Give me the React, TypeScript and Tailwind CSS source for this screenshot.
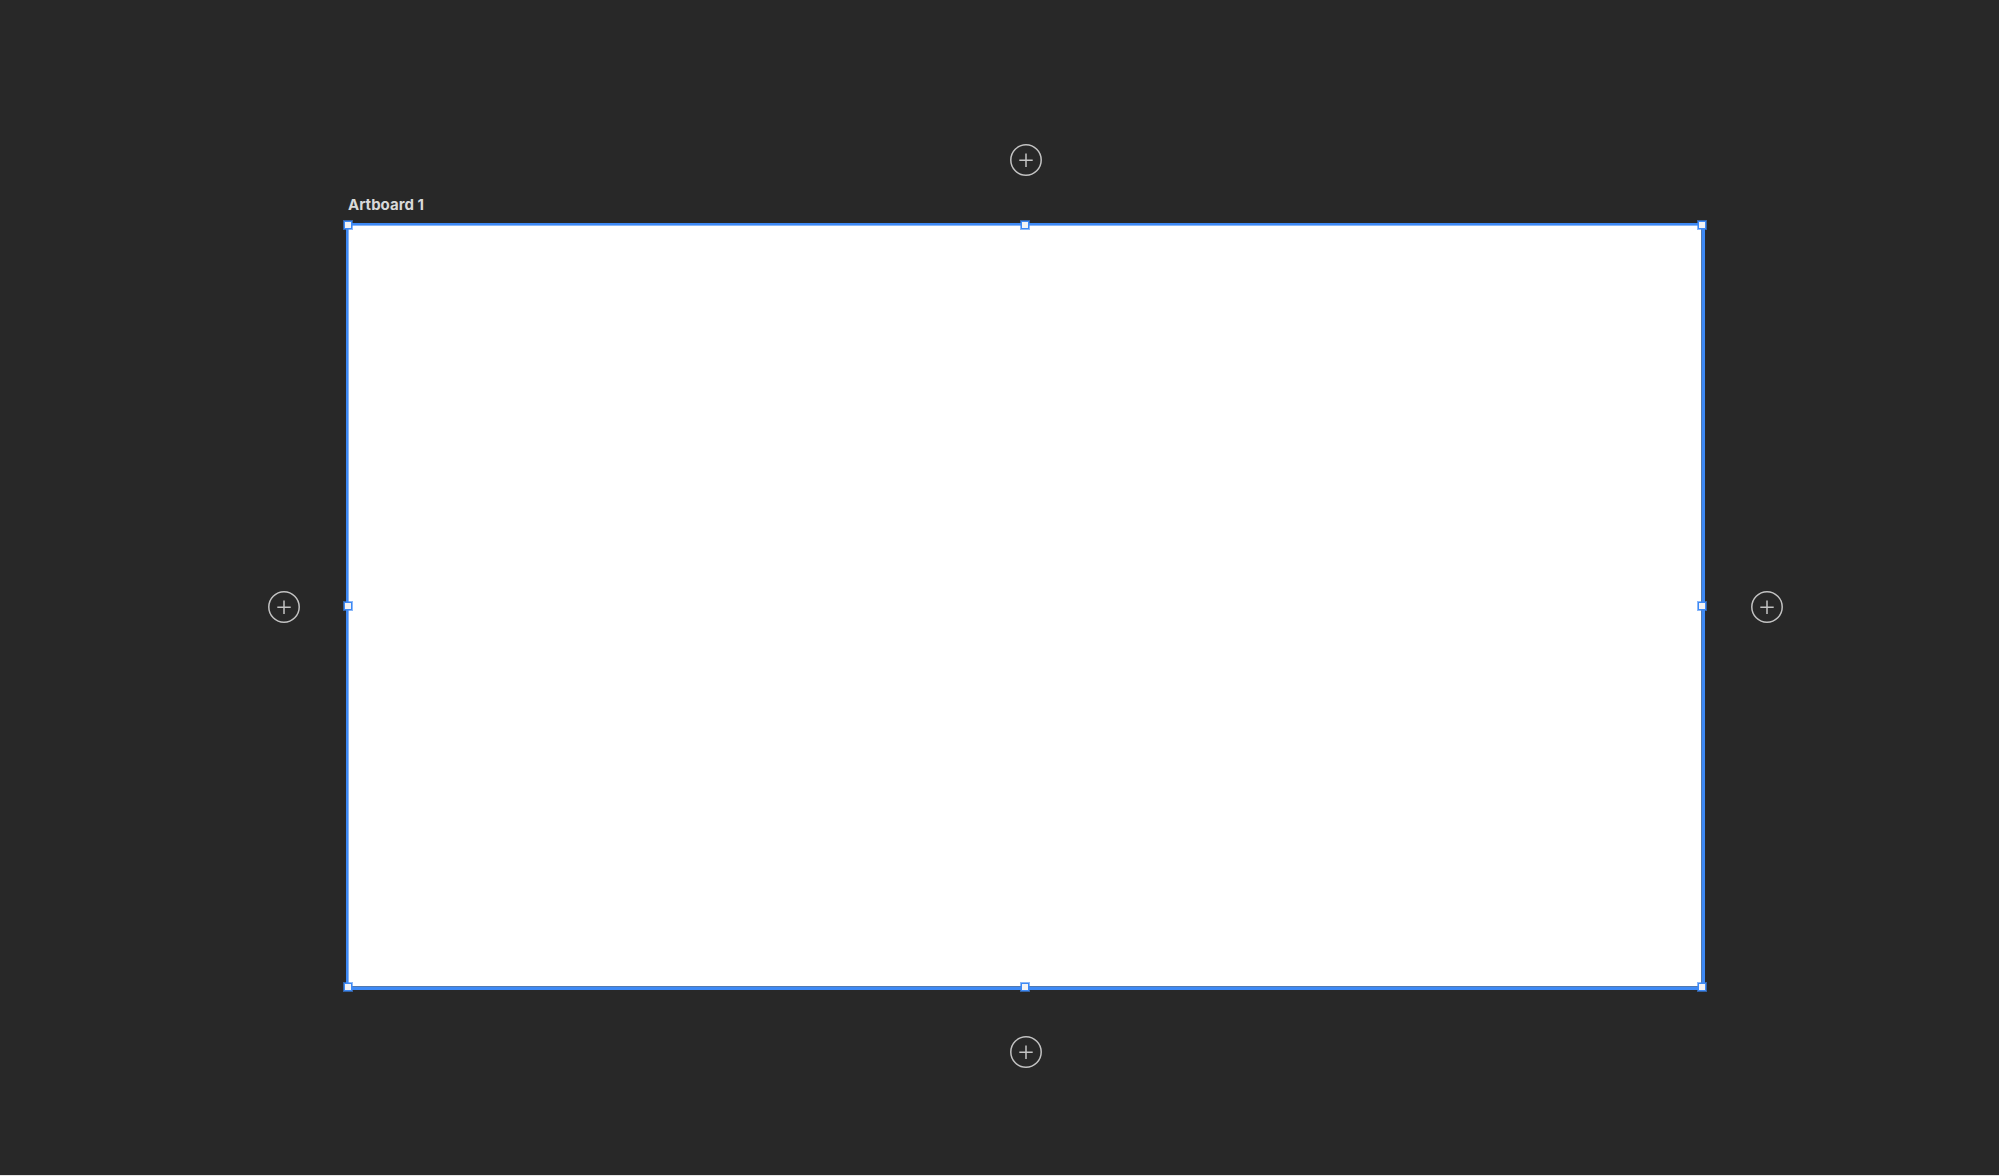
import { useState } from 'react';

interface Handle {
  id: string;
  label: string;
  place: string;
}

const HANDLES: Handle[] = [
  { id: 'nw', label: 'Resize top left', place: 'left-0 top-0 cursor-nwse-resize' },
  { id: 'n', label: 'Resize top', place: 'left-1/2 top-0 cursor-ns-resize' },
  { id: 'ne', label: 'Resize top right', place: 'left-full top-0 cursor-nesw-resize' },
  { id: 'w', label: 'Resize left', place: 'left-0 top-1/2 cursor-ew-resize' },
  { id: 'e', label: 'Resize right', place: 'left-full top-1/2 cursor-ew-resize' },
  { id: 'sw', label: 'Resize bottom left', place: 'left-0 top-full cursor-nesw-resize' },
  { id: 's', label: 'Resize bottom', place: 'left-1/2 top-full cursor-ns-resize' },
  { id: 'se', label: 'Resize bottom right', place: 'left-full top-full cursor-nwse-resize' },
];

function AddButton({ side, onAdd }: { side: string; onAdd: (side: string) => void }) {
  return (
    <button
      type="button"
      aria-label={`Add artboard ${side}`}
      onClick={() => onAdd(side)}
      className="block size-8 shrink-0 rounded-full text-[#c3c3c3] hover:text-white"
    >
      <svg viewBox="0 0 32 32" className="size-8" fill="none" stroke="currentColor">
        <circle cx="16" cy="16" r="15.2" strokeWidth="1.5" />
        <path d="M9.3 16.3h13.4M16 9.6V23" strokeWidth="1.5" />
      </svg>
    </button>
  );
}

function Artboard() {
  return (
    <div className="relative aspect-[1359/767] w-full border-t-2 border-r-[3px] border-b-[3px] border-l-2 border-[#3d89f5] bg-white shadow-[inset_-1px_-1px_#5379ad,inset_1px_1px_#8ab6f7]">
      {/* handles are centred on the corners and edges of this box */}
      <div className="absolute inset-0">
        {HANDLES.map((handle) => (
          <button
            key={handle.id}
            type="button"
            aria-label={handle.label}
            className={`absolute -m-1 size-2 border border-[#3d89f5] bg-[#f3f3f5] ring-1 ring-[#3d89f5]/60 ${handle.place}`}
          />
        ))}
      </div>
    </div>
  );
}

export default function App() {
  const [, setLastAdded] = useState('');

  return (
    <main className="min-h-screen border-b border-[#e4e4e4] bg-[#282828] pt-36 pr-[216px] pb-6 pl-[268px] font-['Inter',sans-serif]">
      <div className="grid grid-cols-[32px_minmax(0,1fr)_32px] items-center justify-items-center gap-x-[46px]">
        <div className="col-start-2">
          <AddButton side="above" onAdd={setLastAdded} />
        </div>
        <h1 className="col-start-2 mt-[19px] mb-2 justify-self-start pl-0.5 text-[15px] leading-5 font-bold text-[#d9d9d9]">
          Artboard 1
        </h1>
        <div className="col-start-1">
          <AddButton side="to the left" onAdd={setLastAdded} />
        </div>
        <Artboard />
        <AddButton side="to the right" onAdd={setLastAdded} />
        <div className="col-start-2 mt-[46px]">
          <AddButton side="below" onAdd={setLastAdded} />
        </div>
      </div>
    </main>
  );
}
